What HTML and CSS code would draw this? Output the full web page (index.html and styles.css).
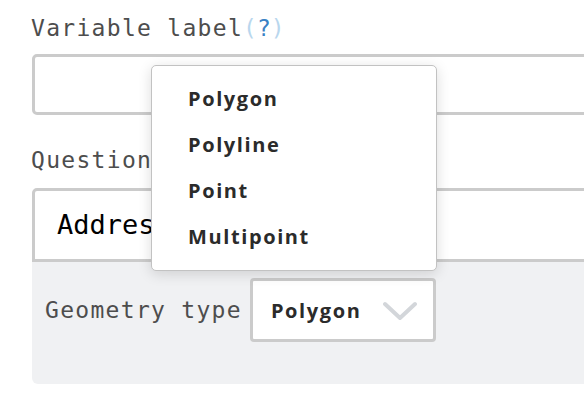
FILE: index.html
```html
<!DOCTYPE html>
<html lang="en">
<head>
  <meta charset="UTF-8">
  <title>Question editor</title>
  <link rel="stylesheet" href="styles.css">
</head>
<body>
<main class="form">
  <div class="field">
    <label class="field-label">Variable label<span class="help">(<b>?</b>)</span></label>
    <div class="field-input field-input-short"></div>
  </div>
  <div class="field">
    <label class="field-label">Question</label>
    <div class="field-input field-input-text">Address</div>
  </div>
  <div class="panel">
    <span class="panel-label">Geometry type</span>
    <div class="select">
      <span class="select-value">Polygon</span>
      <svg class="select-arrow" width="34" height="20" viewBox="0 0 34 20">
        <path d="M2 3 L17 17 L32 3" fill="none" stroke="#d3d6da" stroke-width="4" stroke-linecap="round" stroke-linejoin="round"/>
      </svg>
    </div>
  </div>
</main>
<ul class="menu">
  <li class="menu-item">Polygon</li>
  <li class="menu-item">Polyline</li>
  <li class="menu-item">Point</li>
  <li class="menu-item">Multipoint</li>
</ul>
</body>
</html>
```

FILE: styles.css
```css
html, body {
  margin: 0;
  overflow: hidden;
  background: #fff;
}
body {
  width: 584px;
  height: 408px;
  position: relative;
}
.form {
  width: 620px;
  padding: 13px 0 0 32px;
}
.field-label {
  display: block;
  margin-left: -1px;
  font: 23px/30px "DejaVu Sans Mono", monospace;
  letter-spacing: 1.3px;
  color: #4d4d4d;
}
.help {
  color: #b9d7ee;
  letter-spacing: 0;
}
.help b {
  font-weight: normal;
  color: #3a82c4;
}
.field-input {
  margin-top: 11px;
  border: 3px solid #cbcbcb;
  border-radius: 5px;
  background: #fff;
  box-sizing: border-box;
}
.field-input-short {
  height: 61px;
  margin-bottom: 30px;
}
.field-input-text {
  height: 74px;
  margin-top: 13px;
  border-radius: 5px 5px 0 0;
  padding-left: 22px;
  font: 27px/68px "DejaVu Sans Mono", monospace;
  color: #000;
}
.panel {
  height: 122px;
  box-sizing: border-box;
  padding: 16px 0 0 13px;
  background: #f0f1f3;
  border-radius: 0 0 0 6px;
  display: flex;
  align-items: flex-start;
  gap: 8px;
}
.panel-label {
  font: 23px/64px "DejaVu Sans Mono", monospace;
  letter-spacing: 1.3px;
  color: #4d4d4d;
}
.select {
  width: 186px;
  height: 64px;
  box-sizing: border-box;
  border: 3px solid #cbcbcb;
  border-radius: 4px;
  background: #fff;
  display: flex;
  align-items: center;
  padding-left: 18px;
  gap: 22px;
}
.select-value,
.menu-item {
  font: 700 20px "Open Sans", sans-serif;
  letter-spacing: 1.6px;
  color: #2b2b2b;
}
.select-arrow {
  margin-top: 2px;
}
.menu {
  position: absolute;
  left: 151px;
  top: 65px;
  width: 286px;
  box-sizing: border-box;
  margin: 0;
  padding: 10px 0;
  list-style: none;
  background: #fff;
  border: 1px solid #c2c2c2;
  border-radius: 5px;
  box-shadow: 0 3px 14px rgba(0, 0, 0, .14);
}
.menu-item {
  height: 46px;
  line-height: 46px;
  padding-left: 36px;
}
```
